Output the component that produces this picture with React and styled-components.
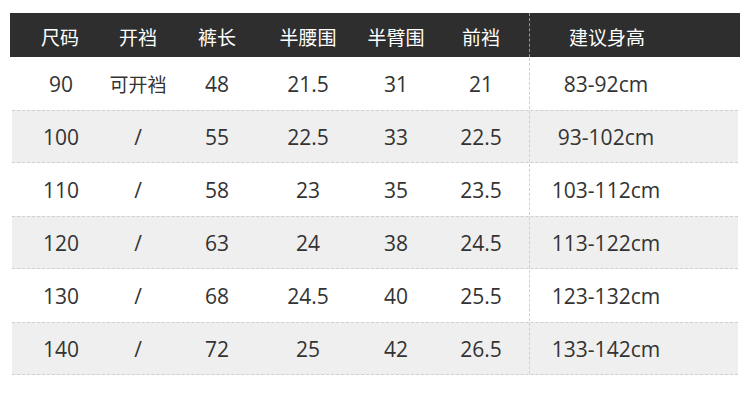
import styled, { createGlobalStyle } from "styled-components";

const GlobalStyle = createGlobalStyle`
  html, body {
    margin: 0;
    padding: 0;
    background: #fff;
  }
  body {
    font-family: "Open Sans", "Noto Sans CJK SC", sans-serif;
  }
`;

// column widths, absolute: 10 | 110 | 166 | 268 | 348 | 444 | 529 | 740
const cols = (inset) =>
  `${100 - inset}px 56px 102px 80px 96px 85px ${211 - inset}px`;

const StyledPage = styled.div`
  padding: 13px 10px 0;
  width: 730px;
`;

const StyledHead = styled.div`
  display: grid;
  grid-template-columns: ${cols(0)};
  height: 44px;
  background-color: #2e2e2e;
  color: #fff;
  font-family: "Noto Sans CJK SC", sans-serif;
  font-size: 19px;
`;

const StyledRow = styled.div`
  display: grid;
  grid-template-columns: ${cols(2)};
  height: 53px;
  margin: 0 2px;
  box-sizing: border-box;
  color: #333;
  font-size: 21px;
  background-color: ${({ $shaded }) => ($shaded ? "#efefef" : "#fff")};
  border-top: 1px dashed ${({ $shaded }) => ($shaded ? "#cfcfcf" : "transparent")};
  border-bottom: 1px dashed ${({ $shaded }) => ($shaded ? "#cfcfcf" : "transparent")};
`;

const StyledCell = styled.div`
  display: flex;
  align-items: center;
  justify-content: center;
  white-space: nowrap;
  padding-right: ${({ $pad }) => $pad || 0}px;
  padding-top: ${({ $head }) => ($head ? "3px" : "1px")};
  font-size: ${({ $cjk }) => ($cjk ? "19px" : "inherit")};
  border-left: ${({ $split, $head }) =>
    $split ? `1px dashed ${$head ? "#9a9a9a" : "#cfcfcf"}` : "none"};
`;

const headers = ["尺码", "开裆", "裤长", "半腰围", "半臂围", "前裆", "建议身高"];

const rows = [
  ["90", "可开裆", "48", "21.5", "31", "21", "83-92cm"],
  ["100", "/", "55", "22.5", "33", "22.5", "93-102cm"],
  ["110", "/", "58", "23", "35", "23.5", "103-112cm"],
  ["120", "/", "63", "24", "38", "24.5", "113-122cm"],
  ["130", "/", "68", "24.5", "40", "25.5", "123-132cm"],
  ["140", "/", "72", "25", "42", "26.5", "133-142cm"],
];

const padFor = (i) => (i === 5 ? 11 : i === 6 ? 56 : 0);

const App = () => {
  return (
    <StyledPage>
      <GlobalStyle />
      <StyledHead>
        {headers.map((h, i) => (
          <StyledCell key={h} $head $split={i === 6} $pad={padFor(i)}>
            {h}
          </StyledCell>
        ))}
      </StyledHead>
      {rows.map((row, r) => (
        <StyledRow key={row[0]} $shaded={r % 2 === 1}>
          {row.map((v, i) => (
            <StyledCell
              key={i}
              $split={i === 6}
              $pad={padFor(i)}
              $cjk={v === "可开裆"}
            >
              {v}
            </StyledCell>
          ))}
        </StyledRow>
      ))}
    </StyledPage>
  );
};

export default App;
